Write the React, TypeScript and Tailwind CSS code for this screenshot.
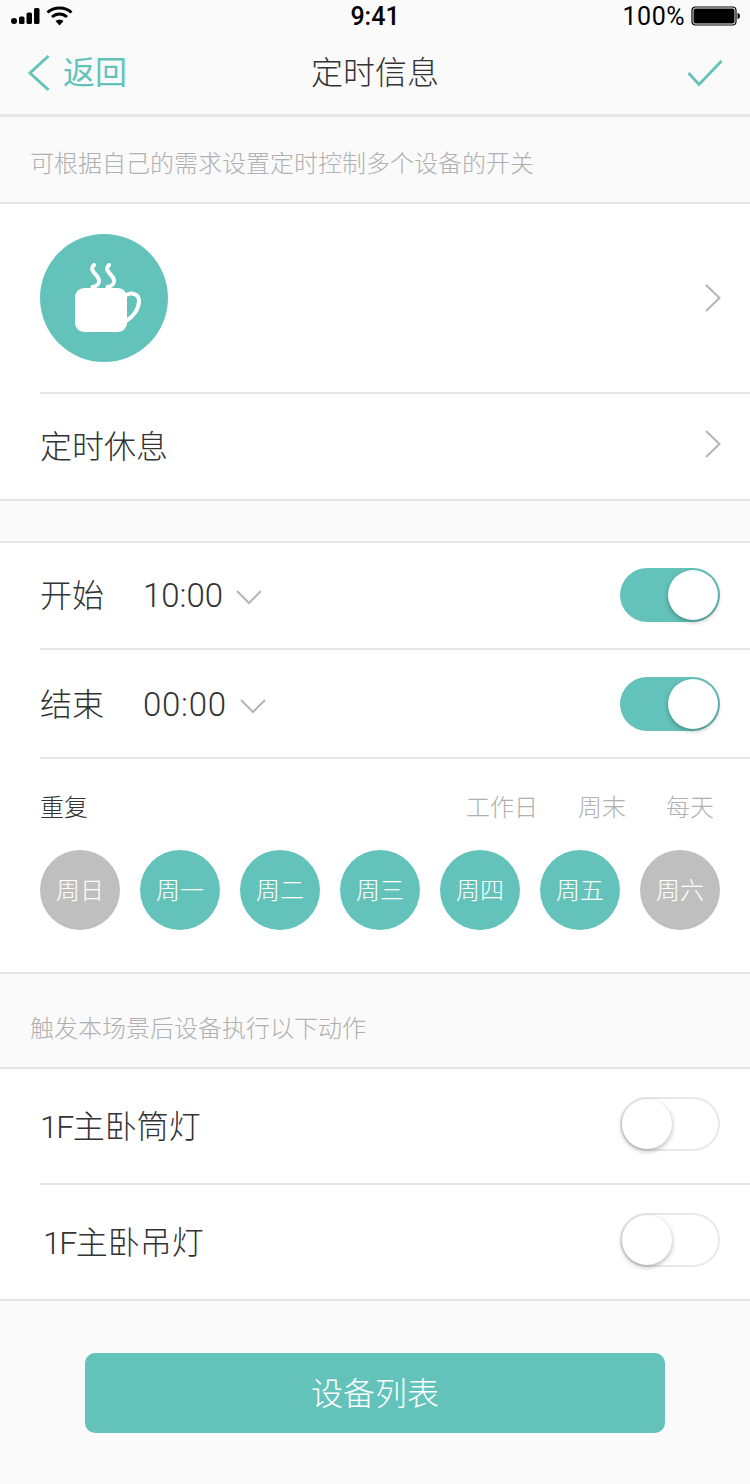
const FONT = "font-['Roboto','Noto_Sans_CJK_SC',sans-serif]";
const days = [
  { label: "周日", on: false },
  { label: "周一", on: true },
  { label: "周二", on: true },
  { label: "周三", on: true },
  { label: "周四", on: true },
  { label: "周五", on: true },
  { label: "周六", on: false },
];

function StatusBar() {
  return (
    <div className="relative flex h-[30px] items-center justify-between pl-[11px] pr-[9px] text-black">
      <div className="flex items-center gap-[5px]">
        <svg width="30" height="18" viewBox="0 0 30 18" fill="currentColor">
          <circle cx="3" cy="14" r="3" />
          <rect x="8" y="9.5" width="5.5" height="7.5" rx="1.5" />
          <rect x="15.5" y="5.5" width="5.5" height="11.5" rx="1.5" />
          <rect x="23" y="1" width="5.5" height="16" rx="1.5" />
        </svg>
        <svg width="27" height="20" viewBox="0 0 27 20" fill="none" stroke="currentColor" strokeWidth="3">
          <path d="M1.5 6.5C8 0.5 19 0.5 25.5 6.5" />
          <path d="M6 11C10.5 7 16.5 7 21 11" />
          <path d="M13.5 19.5L9.5 15C12 13 15 13 17.5 15Z" fill="currentColor" stroke="none" />
        </svg>
      </div>
      <span className="absolute left-0 right-0 pt-[2px] text-center text-[25px] font-medium">9:41</span>
      <div className="flex items-center gap-[6px]">
        <span className="pt-[2px] text-[25px] tracking-[0.5px]">100%</span>
        <svg width="50" height="20" viewBox="0 0 50 20">
          <rect x="1" y="1" width="44" height="18" rx="3.5" fill="none" stroke="black" strokeWidth="1.2" />
          <rect x="2.5" y="2.5" width="41" height="15" rx="2" fill="black" />
          <path d="M46.5 7C48 7.3 49 8.4 49 10C49 11.6 48 12.7 46.5 13Z" fill="black" />
        </svg>
      </div>
    </div>
  );
}

function Toggle({ on }: { on: boolean }) {
  if (on) {
    return (
      <div className="flex h-[54px] w-[100px] items-center justify-end rounded-full bg-[#63c3bb] pr-[2px]">
        <div className="h-[50px] w-[50px] rounded-full bg-white shadow-[0_2px_5px_rgba(0,0,0,0.3)]" />
      </div>
    );
  }
  return (
    <div className="flex h-[54px] w-[100px] items-center rounded-full border-2 border-[#e8e8e8] bg-white">
      <div className="h-[50px] w-[50px] rounded-full bg-white shadow-[0_2px_5px_rgba(0,0,0,0.3)]" />
    </div>
  );
}

function ChevronRightIcon() {
  return (
    <svg width="18" height="28" viewBox="0 0 18 28" fill="none" stroke="#b5b5b5" strokeWidth="2">
      <path d="M2 1L15.5 14L2 27" />
    </svg>
  );
}

function ChevronDownIcon() {
  return (
    <svg width="26" height="15" viewBox="0 0 26 15" fill="none" stroke="#b5b5b5" strokeWidth="2">
      <path d="M1 1L13 13L25 1" />
    </svg>
  );
}

function TimeRow({
  label,
  time,
  offset,
  spacing,
  toggleOffset,
}: {
  label: string;
  time: string;
  offset: string;
  spacing: string;
  toggleOffset: string;
}) {
  return (
    <div className="flex h-full items-center justify-between pr-[30px]">
      <div className={`flex items-center ${offset}`}>
        <span className="w-[103px] text-[32px] font-light text-[#333]">{label}</span>
        <span className={`text-[33px] font-light text-[#333] ${spacing}`}>{time}</span>
        <span className="ml-[13px] mt-[3px] flex">
          <ChevronDownIcon />
        </span>
      </div>
      <span className={toggleOffset}>
        <Toggle on />
      </span>
    </div>
  );
}

function DeviceName({ name }: { name: string }) {
  return (
    <span className="text-[32px] font-light text-[#333]">
      <span className="tracking-[-1.5px]">1F</span>
      {name}
    </span>
  );
}

export default function App() {
  return (
    <div className={`${FONT} flex h-[1484px] w-[750px] flex-col overflow-hidden bg-[#fafafa]`}>
      {/* Header */}
      <div className="h-[117px] border-b-[3px] border-[#e6e6e6] pt-[1px]">
        <StatusBar />
        <div className="relative flex h-[83px] items-center justify-between pl-[26px] pr-[27px]">
          <div className="flex items-center gap-[12px] text-[#63c3bb]">
            <svg width="25" height="38" viewBox="0 0 25 38" fill="none" stroke="currentColor" strokeWidth="3">
              <path d="M22.5 2L4 19L22.5 36" />
            </svg>
            <span className="text-[32px]">返回</span>
          </div>
          <span className="absolute left-0 right-0 pt-[1px] text-center text-[32px] font-light text-[#333]">定时信息</span>
          <svg width="36" height="28" viewBox="0 0 36 28" fill="none" stroke="#63c3bb" strokeWidth="2.8">
            <path d="M1.5 14L12 25.5L34.5 2" />
          </svg>
        </div>
      </div>

      {/* Hint */}
      <div className="flex h-[87px] items-center border-b-2 border-[#e6e6e6] pl-[30px] pt-[8px] text-[24px] font-light text-[#b0b0b0]">
        可根据自己的需求设置定时控制多个设备的开关
      </div>

      {/* Icon and name */}
      <div className="border-b-2 border-[#e6e6e6] bg-white pl-[40px]">
        <div className="flex h-[190px] items-center justify-between border-b-2 border-[#e6e6e6] pr-[28px]">
          <div className="flex h-[128px] w-[128px] items-center justify-center rounded-full bg-[#63c3bb]">
            <svg width="68" height="70" viewBox="0 0 68 70" fill="none" className="ml-[8px]">
              <rect x="1" y="25" width="52" height="44" rx="9" fill="white" />
              <path d="M52 32C58 29 65 31 65 38C65 46 59 54 52 58" stroke="white" strokeWidth="4" />
              <path d="M20 2C14 8 24 11 25 17C25.500 21 22 23.500 18.500 24" stroke="white" strokeWidth="4" strokeLinecap="round" />
              <path d="M35 2C29 8 39 11 40 17C40.500 21 37 23.500 33.500 24" stroke="white" strokeWidth="4" strokeLinecap="round" />
            </svg>
          </div>
          <ChevronRightIcon />
        </div>
        <div className="flex h-[105px] items-center justify-between pr-[28px]">
          <span className="text-[32px] font-light text-[#333]">定时休息</span>
          <span className="-mt-[6px] flex">
            <ChevronRightIcon />
          </span>
        </div>
      </div>

      <div className="h-[42px] border-b-2 border-[#e6e6e6]" />

      {/* Schedule */}
      <div className="border-b-2 border-[#e6e6e6] bg-white pl-[40px]">
        <div className="h-[107px] border-b-2 border-[#e6e6e6]">
          <TimeRow label="开始" time="10:00" offset="mt-[1px]" spacing="" toggleOffset="-mt-[2px]" />
        </div>
        <div className="h-[109px] border-b-2 border-[#e6e6e6]">
          <TimeRow label="结束" time="00:00" offset="mt-[3px]" spacing="tracking-[0.75px]" toggleOffset="" />
        </div>
        <div className="h-[213px] pr-[30px] pt-[32px]">
          <div className="flex items-center justify-between pr-[6px] leading-[34px]">
            <span className="text-[24px] font-light text-[#333]">重复</span>
            <div className="flex gap-[40px] text-[24px] font-light text-[#b0b0b0]">
              <span>工作日</span>
              <span>周末</span>
              <span>每天</span>
            </div>
          </div>
          <div className="mt-[25px] flex justify-between">
            {days.map((d) => (
              <div
                key={d.label}
                className={`flex h-[80px] w-[80px] items-center justify-center rounded-full pt-[2px] text-[24px] font-light text-white ${
                  d.on ? "bg-[#63c3bb]" : "bg-[#bfbfbf]"
                }`}
              >
                {d.label}
              </div>
            ))}
          </div>
        </div>
      </div>

      {/* Actions hint */}
      <div className="flex h-[95px] items-center border-b-2 border-[#e6e6e6] pl-[30px] pt-[16px] text-[24px] font-light text-[#b0b0b0]">
        触发本场景后设备执行以下动作
      </div>

      {/* Devices */}
      <div className="border-b-2 border-[#e6e6e6] bg-white pl-[40px]">
        <div className="flex h-[116px] items-center justify-between border-b-2 border-[#e6e6e6] pr-[30px]">
          <span className="mt-[1px]">
            <DeviceName name="主卧筒灯" />
          </span>
          <span className="-mt-[4px]">
            <Toggle on={false} />
          </span>
        </div>
        <div className="flex h-[114px] items-center justify-between pr-[30px]">
          <span className="mt-[1px] pl-[3px]">
            <DeviceName name="主卧吊灯" />
          </span>
          <span className="-mt-[5px]">
            <Toggle on={false} />
          </span>
        </div>
      </div>

      <div className="flex justify-center pt-[52px]">
        <button className="h-[80px] w-[580px] rounded-[10px] bg-[#63c3bb] pt-[2px] text-[32px] font-light text-white">设备列表</button>
      </div>
    </div>
  );
}
